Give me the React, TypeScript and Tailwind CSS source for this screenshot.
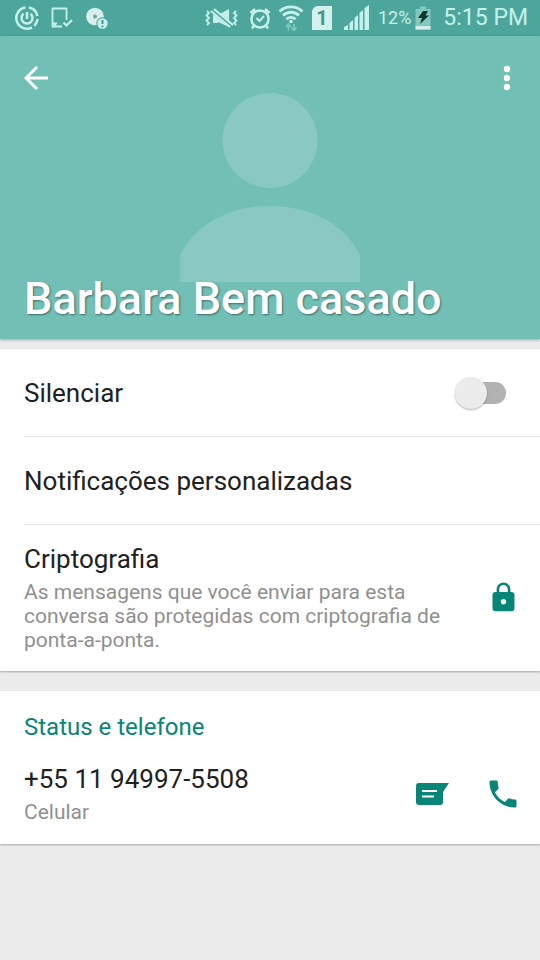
import { useState } from "react";
import { MdLock } from "react-icons/md";

function StatusBar() {
  return (
    <div className="flex h-9 items-center justify-between bg-[#4da69c] pr-3 pl-[15px] text-[#c5f1ec]">
      <div className="flex items-center gap-3">
        <svg viewBox="0 0 24 24" className="size-6" fill="none" stroke="currentColor" strokeWidth="2.5" aria-hidden="true">
          <path d="M14 1.6A10.6 10.6 0 0 1 22.4 10M22.5 13a10.6 10.6 0 0 1-3.2 6.8M17 21.3A10.6 10.6 0 1 1 10.5 1.5" />
          <path d="M8.500 7.800a5.500 5.500 0 1 0 7 0" />
          <path d="M12 6v7" />
        </svg>
        <svg viewBox="0 0 22 24" className="h-6 w-[22px]" fill="none" stroke="currentColor" strokeWidth="1.8" aria-hidden="true">
          <path d="M15.5 14V2.5h-14v18H11M2 17.5h3l-2 3" />
          <path d="m12.5 16.5 3 3 5.5-5.5" strokeWidth="2.2" />
        </svg>
        <svg viewBox="0 0 24 24" className="size-6" aria-hidden="true">
          <circle cx="10" cy="10.5" r="8.8" fill="#d8efeb" />
          <circle cx="10" cy="10.5" r="2" fill="#6aa59f" />
          <circle cx="17.5" cy="17.5" r="6.2" fill="#4da69c" />
          <circle cx="17.5" cy="17.5" r="5.2" fill="#c5f1ec" />
          <path d="M17.5 14v4M17.5 19.5v1.7" stroke="#3f8f87" strokeWidth="1.8" />
        </svg>
      </div>

      <div className="flex items-center">
        <svg viewBox="0 0 36 24" className="h-6 w-9" fill="none" stroke="currentColor" strokeWidth="1.8" aria-hidden="true">
          <path d="m3 5 2 2-2.500 2.500L5 12l-2.500 2.500L5 17l-2 2M32 5l-2 2 2.500 2.500L30 12l2.500 2.500L30 17l2 2" />
          <path d="M9 7h5v10H9zM14 9l11-6v18l-11-5z" fill="currentColor" stroke="none" />
          <path d="m8 4 21 17" stroke="#4da69c" strokeWidth="5" />
          <path d="m7 5 19 16M10 3l19 16" strokeWidth="2.200" />
        </svg>
        <svg viewBox="0 0 24 24" className="ml-2 size-6" fill="none" stroke="currentColor" strokeWidth="2.5" aria-hidden="true">
          <circle cx="12" cy="13" r="8.6" />
          <path d="M2.5 7 7 3M21.5 7 17 3M6 19.5l-2 3M18 19.5l2 3" />
          <path d="m8.5 12 3 3 4.5-5" strokeWidth="2" />
        </svg>
        <svg viewBox="0 0 26 26" className="ml-1.5 size-[26px]" fill="none" stroke="currentColor" strokeWidth="2.8" aria-hidden="true">
          <path d="M1.5 6.5a16.5 16.5 0 0 1 23 0M5 10.5a11.5 11.5 0 0 1 16 0M8.5 14.2a6.5 6.5 0 0 1 9 0" />
          <circle cx="13" cy="16.5" r="1.8" fill="currentColor" stroke="none" />
          <path d="M10.5 25.5v-6M8 22l2.5-2.8L13 22M16 19v6M13.5 22.500l2.500 2.800 2.500-2.800" stroke="#7fc9c0" strokeWidth="1.7" />
        </svg>
        <span className="ml-2 flex h-6 w-5 items-center justify-center rounded-tl-md bg-[#d3f0ec] text-xl leading-6 font-bold text-[#45968d]">
          1
        </span>
        <svg viewBox="0 0 26 26" className="ml-3 size-[26px]" fill="currentColor" aria-hidden="true">
          <path d="M0 25v-3l4-2v5zM5.500 25v-7l3.500-3v10zM10.500 25V13l3.500-3v15zM15.500 25V8l3.500-3v20zM20.500 25V3L25 0v25z" />
        </svg>
        <span className="ml-2 text-lg leading-6">12%</span>
        <svg viewBox="0 0 16 24" className="ml-1 h-6 w-4" aria-hidden="true">
          <path d="M.5 3H5V.5h6V3h4.5v20.500H.5z" fill="#83c8bf" />
          <path d="M.5 20h15v3.500H.5z" fill="#d3f0ec" />
          <path d="M8 5h5l-2.500 4.500H14L5 18l2-6H3z" fill="#12332f" />
        </svg>
        <span className="ml-3 text-[23px] leading-8 whitespace-nowrap">5:15 PM</span>
      </div>
    </div>
  );
}

function Header() {
  return (
    <header className="relative flex h-[303px] flex-col justify-between bg-[#72bfb6] shadow-[0_1px_3px_rgba(0,0,0,0.3)]">
      <svg
        viewBox="0 0 180 190"
        className="absolute top-14 left-1/2 h-[190px] w-[180px] -translate-x-1/2"
        fill="#89c9c2"
        aria-hidden="true"
      >
        <circle cx="90" cy="48.5" r="47.5" />
        <path d="M0 190v-27C15 133 48 114 90 114s75 19 90 49v27z" />
      </svg>
      <div className="relative flex items-center justify-between pt-5 pr-[15px] pl-4">
        <button type="button" aria-label="Voltar" className="flex size-11 items-center pl-2 text-white">
          <svg viewBox="0 0 24 24" className="size-6" fill="none" stroke="currentColor" strokeWidth="3" aria-hidden="true">
            <path d="M24 12H2.5M13 1 2 12l11 11" />
          </svg>
        </button>
        <button type="button" aria-label="Mais opções" className="flex h-11 w-9 items-center justify-center text-white">
          <svg viewBox="0 0 8 26" className="h-[26px] w-2" fill="currentColor" aria-hidden="true">
            <circle cx="4" cy="4" r="3.2" />
            <circle cx="4" cy="13" r="3.2" />
            <circle cx="4" cy="22" r="3.2" />
          </svg>
        </button>
      </div>
      <h1 className="relative px-6 pb-3 text-[45px] leading-14 font-medium text-white [text-shadow:1px_1px_2px_rgba(0,0,0,0.45)]">
        Barbara Bem casado
      </h1>
    </header>
  );
}

export default function App() {
  const [muted, setMuted] = useState(false);

  return (
    <div className="min-h-screen bg-[#ececec] font-[Roboto,sans-serif] text-[#212121]">
      <StatusBar />
      <Header />

      <main>
        <section className="mt-2.5 bg-white shadow-[0_1px_2px_rgba(0,0,0,0.3)]">
          <label className="flex h-[87px] items-center justify-between pr-[34px] pl-6">
            <span className="text-[26px] leading-8">Silenciar</span>
            <span className="relative flex h-8 w-[51px] items-center justify-end">
              <input
                type="checkbox"
                role="switch"
                className="peer sr-only"
                checked={muted}
                onChange={(e) => setMuted(e.target.checked)}
              />
              <span className="h-[22px] w-11 rounded-full bg-[#b2b2b2] peer-checked:bg-[#80c4bb]" />
              <span className="absolute left-0 size-8 rounded-full bg-[#ececec] shadow-[0_1px_2px_rgba(0,0,0,0.3)] peer-checked:left-5 peer-checked:bg-[#078577]" />
            </span>
          </label>
          <button type="button" className="ml-6 flex h-[89px] w-[calc(100%-24px)] items-center border-y border-[#e2e2e2] text-left text-[26px] leading-8">
            Notificações personalizadas
          </button>
          <div className="flex items-center justify-between pt-[18px] pr-5 pb-[19px] pl-6">
            <div className="max-w-[430px]">
              <h2 className="text-[26px] leading-8">Criptografia</h2>
              <p className="mt-[5px] text-[21px] leading-6 text-[#909090]">
                As mensagens que você enviar para esta conversa são protegidas com criptografia de ponta-a-ponta.
              </p>
            </div>
            <MdLock className="size-[33px] shrink-0 text-[#078577]" aria-hidden="true" />
          </div>
        </section>

        <section className="mt-5 bg-white pt-5 pr-[19px] pb-5 pl-6 shadow-[0_1px_2px_rgba(0,0,0,0.3)]">
          <h2 className="text-2xl leading-8 text-[#078577]">Status e telefone</h2>
          <div className="mt-5 flex items-center justify-between">
            <div>
              <p className="text-[26px] leading-8">+55 11 94997-5508</p>
              <p className="mt-[5px] text-[21px] leading-6 text-[#909090]">Celular</p>
            </div>
            <div className="flex items-center gap-9 text-[#078577]">
              <button type="button" aria-label="Enviar mensagem">
                <svg viewBox="0 0 33 22" className="h-[22px] w-[33px]" aria-hidden="true">
                  <path d="M3 0h30l-6 9v10a3 3 0 0 1-3 3H3a3 3 0 0 1-3-3V3a3 3 0 0 1 3-3z" fill="currentColor" />
                  <path d="M6 8h15M6 13.5h12" stroke="#fff" strokeWidth="2.2" />
                </svg>
              </button>
              <button type="button" aria-label="Ligar">
                <svg viewBox="0 0 24 24" className="size-9" fill="currentColor" aria-hidden="true">
                  <path d="M6.6 10.8c1.4 2.8 3.8 5.1 6.6 6.6l2.2-2.2c.3-.3.7-.4 1-.2 1.1.4 2.3.6 3.6.6.6 0 1 .4 1 1V20c0 .6-.4 1-1 1C10.600 21 3 13.400 3 4c0-.6.4-1 1-1h3.500c.6 0 1 .4 1 1 0 1.200.2 2.500.6 3.600.1.4 0 .7-.2 1z" />
                </svg>
              </button>
            </div>
          </div>
        </section>
      </main>
    </div>
  );
}
